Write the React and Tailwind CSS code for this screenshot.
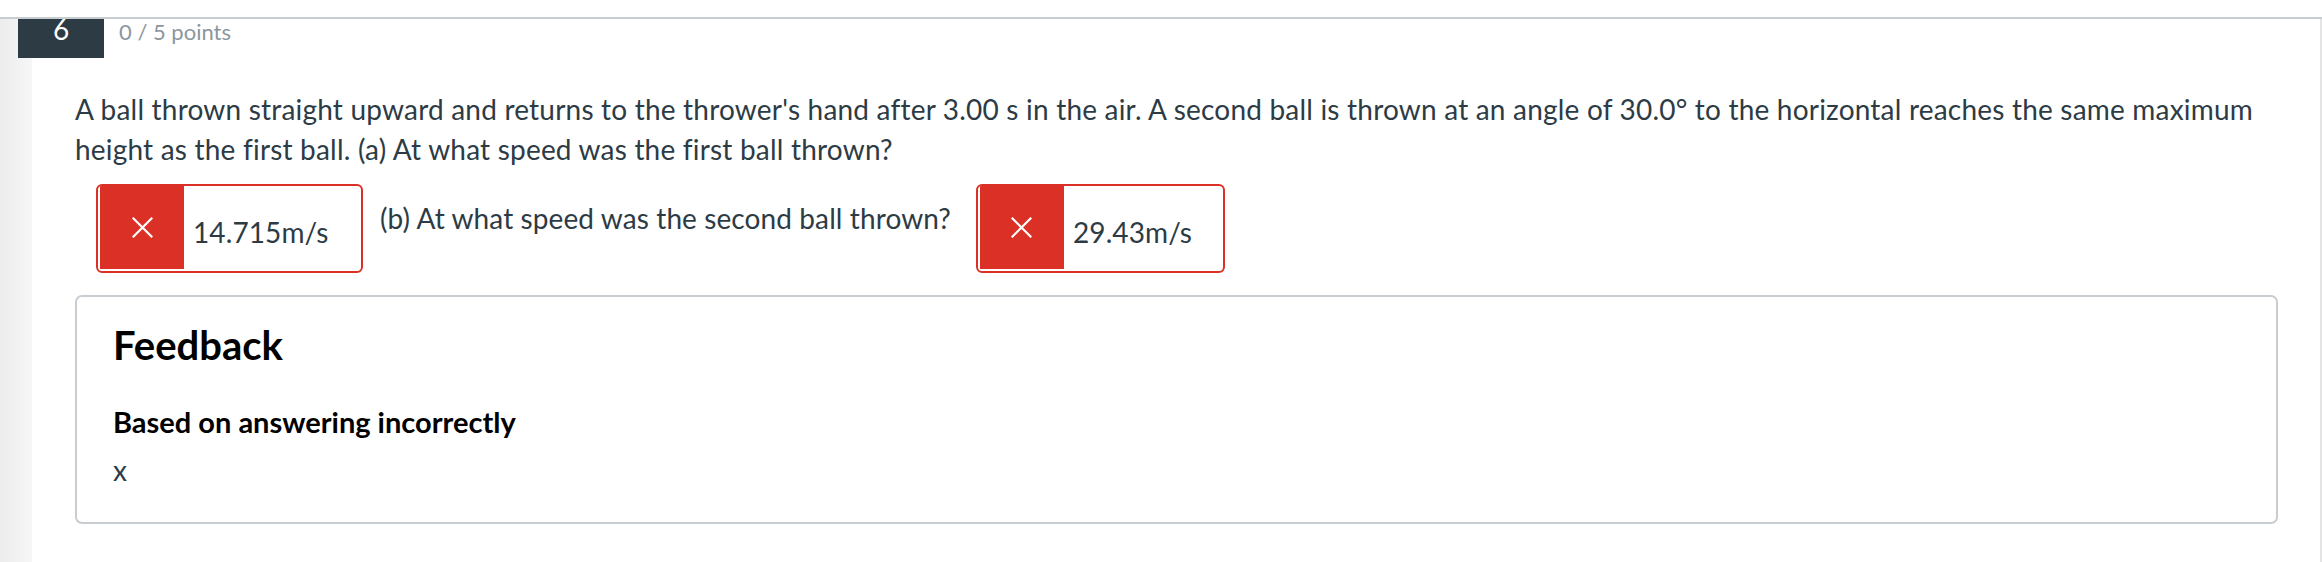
import React from 'react';

const font = { fontFamily: 'Lato, "Open Sans", sans-serif' };

function CrossIcon() {
  return (
    <svg width="21" height="21" viewBox="0 0 21 21" fill="none">
      <path d="M1.5 1.5 L19.5 19.5 M19.5 1.5 L1.5 19.5" stroke="#ffffff" strokeWidth="2.2" strokeLinecap="square" />
    </svg>
  );
}

function WrongAnswer({ value, width }) {
  return (
    <div className={`flex h-[89px] border-2 border-[#db3026] rounded-[6px] bg-white overflow-hidden ${width}`}>
      <div className="w-[84px] shrink-0 mb-[2px] ml-[2px] bg-[#db3026] flex items-center justify-center">
        <CrossIcon />
      </div>
      <div className="pl-[9px] flex items-center pt-[6px] text-[28px] leading-[40px] tracking-[0.1px] text-[#2d3b45] whitespace-nowrap">
        {value}
      </div>
    </div>
  );
}

export default function App() {
  return (
    <div className="w-[2322px] h-[562px] bg-white relative overflow-hidden" style={font}>
      <div className="h-[17px]" />
      <div className="flex h-[545px] border-t-2 border-[#c7cdd1]">
        {/* left gutter shadow */}
        <div className="w-[32px] bg-gradient-to-r from-[#ececec] to-[#f7f7f7]" />

        {/* question body */}
        <div className="flex-1 border-r-2 border-[#e4e4e4] pl-[43px] pr-[42px]">
          <div className="h-[52px] pl-[44px] text-[22px] leading-[26px] text-[#8b969e]">0 / 5 points</div>

          <p className="text-[28px] leading-[40px] tracking-[0.2px] text-[#2d3b45] pt-[18px]">
            A ball thrown straight upward and returns to the thrower's hand after 3.00 s in the air. A second ball is thrown at an angle of 30.0° to the horizontal reaches the same maximum height as the first ball. (a) At what speed was the first ball thrown?
          </p>

          <div className="flex items-start mt-[15px] pl-[21px]">
            <WrongAnswer value="14.715m/s" width="w-[267px]" />
            <span className="ml-[17px] mt-[14px] text-[28px] leading-[40px] tracking-[0.1px] text-[#2d3b45]">
              (b) At what speed was the second ball thrown?
            </span>
            <div className="ml-[25px]">
              <WrongAnswer value="29.43m/s" width="w-[249px]" />
            </div>
          </div>

          <div className="mt-[22px] h-[229px] border-2 border-[#c7cdd1] rounded-[7px] pl-[36px] pt-[24px]">
            <h3 className="text-[40px] leading-[48px] font-bold text-black">Feedback</h3>
            <div className="mt-[33px] text-[29px] leading-[40px] font-bold text-black">Based on answering incorrectly</div>
            <div className="mt-[8px] text-[28px] leading-[40px] text-[#2d3b45]">x</div>
          </div>
        </div>
      </div>

      {/* question number badge */}
      <div className="absolute left-[18px] top-[19px] w-[86px] h-[39px] bg-[#2d3b45] flex justify-center">
        <span className="text-[28px] leading-[20px] text-white">6</span>
      </div>
    </div>
  );
}
